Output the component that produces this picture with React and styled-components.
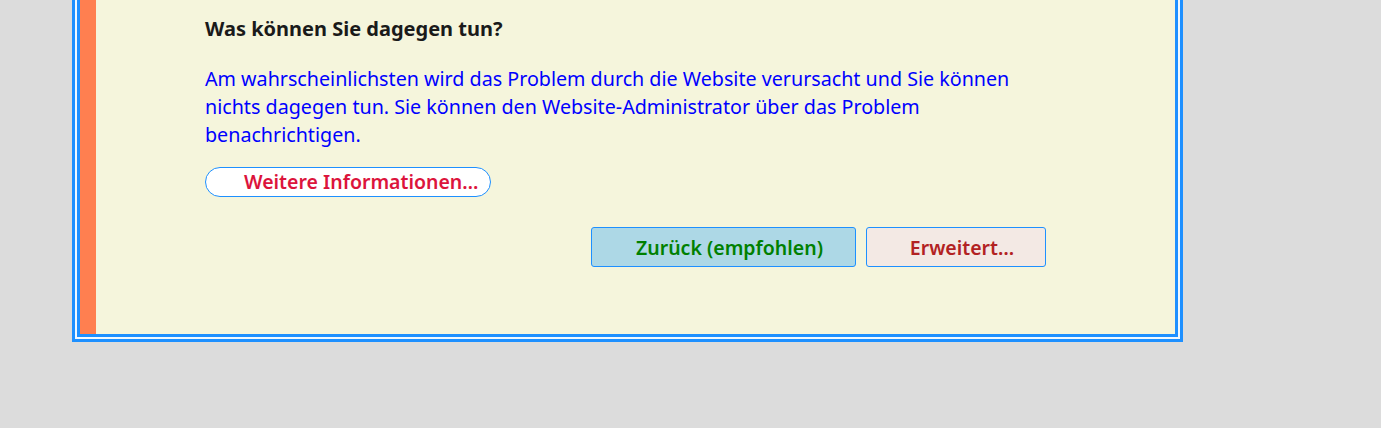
import styled, { createGlobalStyle } from 'styled-components';

const GlobalStyle = createGlobalStyle`
  html, body {
    margin: 0;
    padding: 0;
    background: #dcdcdc;
  }
  body {
    font-family: "Noto Sans", "Open Sans", sans-serif;
  }
`;

const Page = styled.div`
  padding-left: 72px;
`;

const OuterFrame = styled.div`
  width: 1101px;
  border: 3px solid #1e90ff;
  border-top: 0;
  padding: 0 2px 2px 2px;
  background: #f0f8ff;
`;

const InnerFrame = styled.div`
  border: 3px solid #1e90ff;
  border-top: 0;
  background: #f5f5dc;
`;

const Body = styled.div`
  border-left: 16px solid #ff7f50;
  padding: 15px 129px 67px 109px;
`;

const Heading = styled.h2`
  margin: 0;
  font-size: 20px;
  line-height: 28px;
  font-weight: 700;
  color: #1a1a1a;
`;

const Text = styled.p`
  margin: 22px 0 0;
  font-size: 19.7px;
  line-height: 28px;
  color: #0000ff;
`;

const MoreLink = styled.button`
  margin-top: 18px;
  display: inline-block;
  height: 30px;
  padding: 0 12px 0 38px;
  border: 1px solid #1e90ff;
  border-radius: 15px;
  background: #ffffff;
  color: #dc143c;
  font-family: inherit;
  font-size: 19.5px;
  font-weight: 600;
  line-height: 28px;
  cursor: pointer;
`;

const Actions = styled.div`
  display: flex;
  justify-content: flex-end;
  gap: 10px;
  margin-top: 30px;
`;

const Button = styled.button`
  width: ${p => p.$width}px;
  height: 40px;
  border: 1px solid #1e90ff;
  border-radius: 3px;
  background: ${p => p.$bg};
  color: ${p => p.$color};
  font-family: inherit;
  font-size: 19.5px;
  font-weight: 600;
  padding: 0 0 0 12px;
  cursor: pointer;
`;

export default function App() {
  return (
    <>
      <GlobalStyle />
      <Page>
        <OuterFrame>
          <InnerFrame>
            <Body>
              <Heading>Was können Sie dagegen tun?</Heading>
              <Text>
                Am wahrscheinlichsten wird das Problem durch die Website verursacht und Sie können
                nichts dagegen tun. Sie können den Website-Administrator über das Problem
                benachrichtigen.
              </Text>
              <MoreLink>Weitere Informationen…</MoreLink>
              <Actions>
                <Button $width={265} $bg="#add8e6" $color="#008000">Zurück (empfohlen)</Button>
                <Button $width={180} $bg="#f3e9e4" $color="#b22222">Erweitert…</Button>
              </Actions>
            </Body>
          </InnerFrame>
        </OuterFrame>
      </Page>
    </>
  );
}
